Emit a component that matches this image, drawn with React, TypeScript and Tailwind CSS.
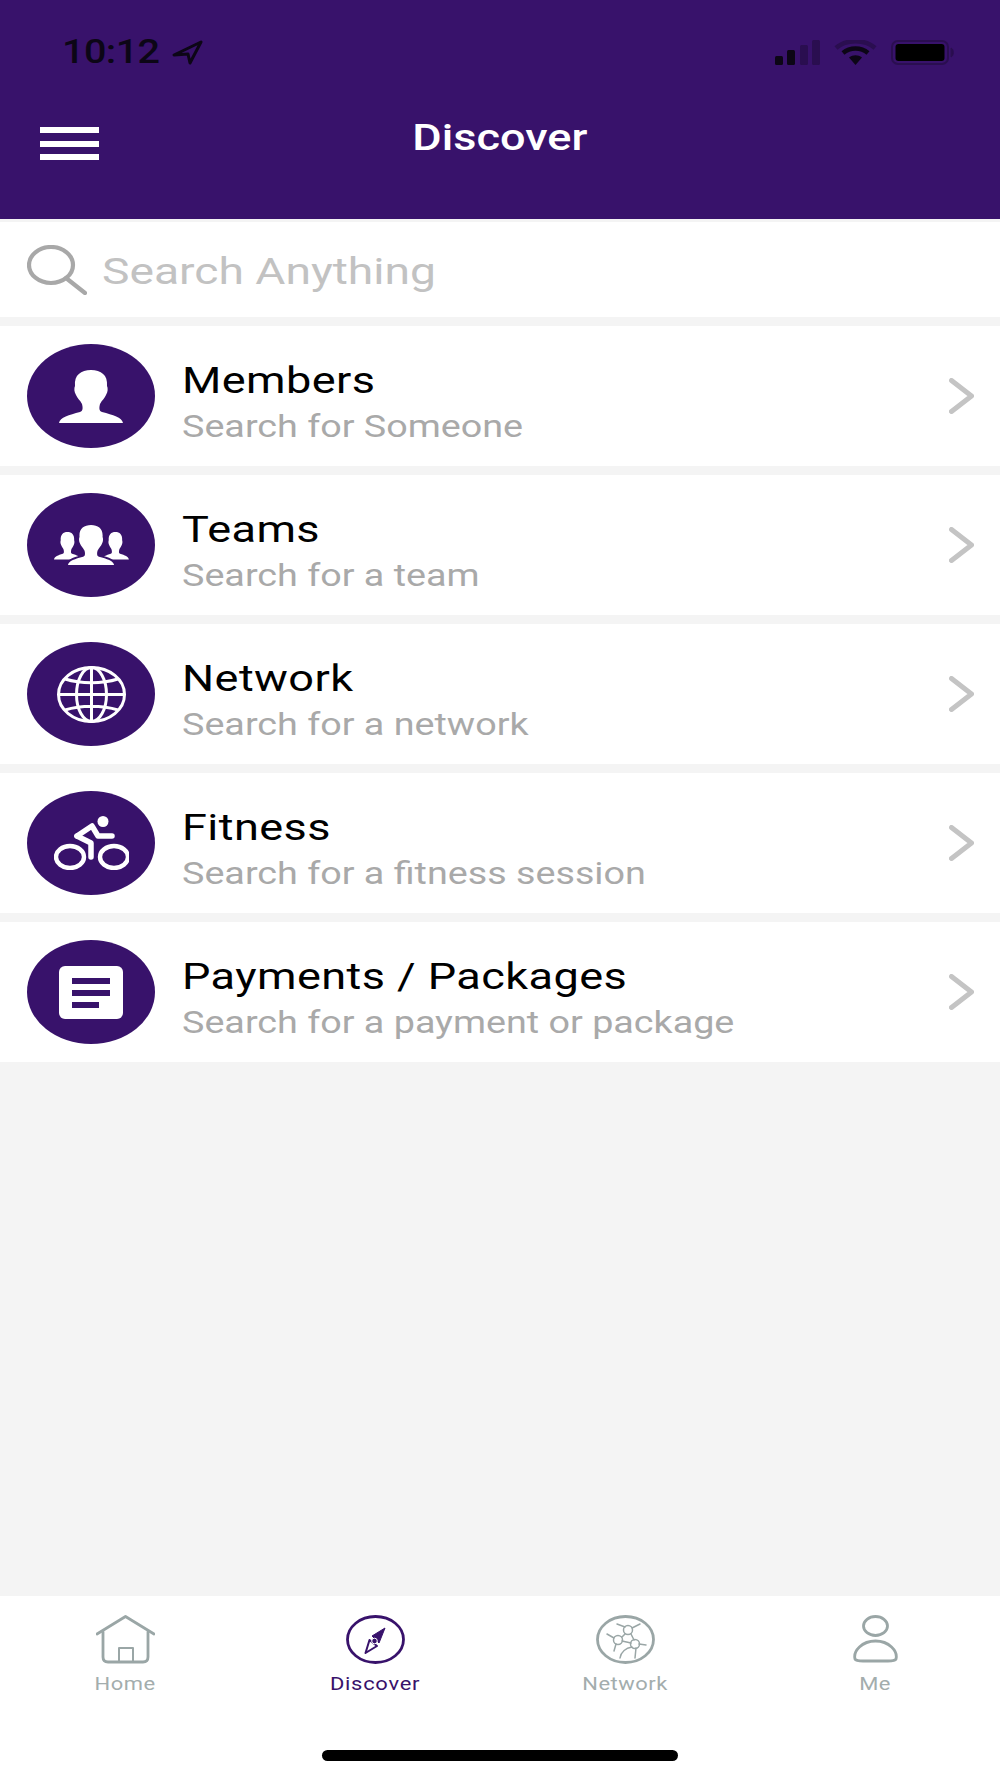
const ROWS = [
  { title: "Members", sub: "Search for Someone", icon: <MemberIcon /> },
  { title: "Teams", sub: "Search for a team", icon: <TeamIcon /> },
  { title: "Network", sub: "Search for a network", icon: <GlobeIcon /> },
  { title: "Fitness", sub: "Search for a fitness session", icon: <BikeIcon /> },
  { title: "Payments / Packages", sub: "Search for a payment or package", icon: <ListIcon /> },
];

const TABS = [
  { label: "Home", icon: <HomeIcon />, active: false },
  { label: "Discover", icon: <CompassIcon />, active: true },
  { label: "Network", icon: <NetworkIcon />, active: false },
  { label: "Me", icon: <MeIcon />, active: false },
];

const PERSON =
  "M0 53C1 47 10 45 21 42C24 41 24 38 23 34C21 30 18 28 17 25C15 22 15 18 16 16C15 5 22 0 32 0C42 0 49 5 48 16C49 18 49 22 47 25C46 28 43 30 41 34C40 38 40 41 43 42C54 45 63 47 64 53Z";

function MemberIcon() {
  return (
    <svg width="64" height="53" viewBox="0 0 64 53" fill="#fff">
      <path d={PERSON} />
    </svg>
  );
}

function TeamIcon() {
  return (
    <svg width="75" height="40" viewBox="0 0 75 40" fill="#fff">
      <g transform="translate(0 7) scale(0.42 0.52)">
        <path d={PERSON} />
      </g>
      <g transform="translate(48 7) scale(0.42 0.52)">
        <path d={PERSON} />
      </g>
      <g transform="translate(14 0) scale(0.72 0.755)">
        <path d={PERSON} stroke="#38126b" strokeWidth="5" paintOrder="stroke" />
      </g>
    </svg>
  );
}

function GlobeIcon() {
  return (
    <svg width="69" height="57" viewBox="0 0 69 57" fill="none" stroke="#fff" strokeWidth="3">
      <ellipse cx="34.5" cy="28.5" rx="33" ry="27" />
      <ellipse cx="34.5" cy="28.5" rx="15" ry="27" />
      <path d="M34.5 1.5V55.5M1.5 28.5H67.5M8 13C24 18 45 18 61 13M8 44C24 39 45 39 61 44" />
    </svg>
  );
}

function BikeIcon() {
  return (
    <svg width="75" height="54" viewBox="0 0 75 54" fill="none" stroke="#fff" strokeWidth="4.4">
      <ellipse cx="16" cy="41" rx="14" ry="11" />
      <ellipse cx="60" cy="41" rx="14" ry="11" />
      <circle cx="49" cy="5.5" r="5.5" fill="#fff" stroke="none" />
      <path d="M23 20L38 10L44 20H58" strokeLinecap="round" strokeLinejoin="round" strokeWidth="5.5" />
      <path d="M23 20L37 27V41" strokeLinecap="round" strokeLinejoin="round" strokeWidth="5.5" />
    </svg>
  );
}

function ListIcon() {
  return (
    <svg width="64" height="53" viewBox="0 0 64 53">
      <rect width="64" height="53" rx="6" fill="#fff" />
      <path d="M13 12H51V18H13ZM13 24H51V30H13ZM13 36H40V42H13Z" fill="#38126b" />
    </svg>
  );
}

function HomeIcon() {
  return (
    <svg width="59" height="49" viewBox="0 0 59 49" fill="none" stroke="#9aa6a6" strokeWidth="2.8" strokeLinejoin="round" strokeLinecap="round">
      <path d="M1 19L29.5 1.5L58 19" />
      <path d="M7 17V42C7 45.5 9 47 12 47H47C50 47 52 45.5 52 42V17" />
      <path d="M23 47V33H37V47" strokeWidth="2" />
    </svg>
  );
}

function CompassIcon() {
  return (
    <svg width="59" height="49" viewBox="0 0 59 49" fill="none" stroke="#38126b">
      <ellipse cx="29.5" cy="24.5" rx="28" ry="23" strokeWidth="2.8" />
      <path d="M39 13L26 21L33 28Z" fill="#38126b" strokeWidth="1" strokeLinejoin="round" />
      <path d="M19.5 38L23.5 25L31 31Z" strokeWidth="2" strokeLinejoin="round" />
      <circle cx="28.5" cy="26" r="2.8" fill="#38126b" stroke="#fff" strokeWidth="1" />
    </svg>
  );
}

function NetworkIcon() {
  return (
    <svg width="59" height="49" viewBox="0 0 59 49" fill="none" stroke="#9aa6a6" strokeWidth="1.5" strokeLinecap="round">
      <ellipse cx="29.5" cy="24.5" rx="28" ry="23" strokeWidth="2.8" />
      <circle cx="32" cy="15" r="4.5" />
      <circle cx="22" cy="25" r="4.5" />
      <circle cx="39" cy="29" r="4.5" />
      <path d="M21 9L29 12M44 9L36 13M26 22L29 19M35 19L38 25M26 26L35 28M18 23L11 19M20 29L18 36M43 29L50 30M40 33L39 43M36 32C30 33 25 37 24 43" />
    </svg>
  );
}

function MeIcon() {
  return (
    <svg width="47" height="49" viewBox="0 0 47 49" fill="none" stroke="#9aa6a6" strokeWidth="2.8">
      <ellipse cx="23.5" cy="11" rx="12" ry="9.5" />
      <path d="M3 44C1 36 10 26 23.5 26C37 26 46 36 44 44C43 46 40 46 36 46H11C7 46 4 46 3 44Z" />
    </svg>
  );
}

function StatusBar() {
  return (
    <div className="flex h-[104px] items-end justify-between pb-[39px] pl-[62px] pr-[46px]">
      <div className="flex items-center gap-[10px]">
        <span className="inline-block w-[97px] origin-left scale-x-[1.2] font-['Roboto',sans-serif] text-[33px] leading-[26px] font-medium tracking-[-0.5px] text-[#0c0616]">
          10:12
        </span>
        <svg width="31" height="25" viewBox="0 0 31 25" className="ml-[3px]">
          <path d="M2 15L29 2L18 23L16 14Z" fill="none" stroke="#0c0616" strokeWidth="3" strokeLinejoin="round" />
        </svg>
      </div>
      <div className="flex items-center gap-[14px]">
        <svg width="45" height="25" viewBox="0 0 45 25">
          <rect x="0" y="16" width="8" height="9" rx="1.5" fill="#0c0616" />
          <rect x="12" y="10" width="8" height="15" rx="1.5" fill="#0c0616" />
          <rect x="25" y="5" width="8" height="20" rx="1.5" fill="#2a0e50" />
          <rect x="37" y="0" width="8" height="25" rx="1.5" fill="#2a0e50" />
        </svg>
        <svg width="43" height="25" viewBox="0 0 43 25" fill="none">
          <path d="M2 8C12 -1 31 -1 41 8" stroke="#2a0e50" strokeWidth="4.5" />
          <path d="M9 13C16 7 27 7 34 13" stroke="#0c0616" strokeWidth="4.5" />
          <path d="M15 17.5L21.5 25L28 17.5C24 14.5 19 14.5 15 17.5Z" fill="#0c0616" />
        </svg>
        <svg width="63" height="25" viewBox="0 0 63 25">
          <rect x="1" y="1" width="56" height="23" rx="6" fill="none" stroke="#2a0e50" strokeWidth="2" />
          <rect x="4.5" y="4" width="49" height="17" rx="3" fill="#000" />
          <path d="M60 8C63 9 63 16 60 17Z" fill="#2a0e50" stroke="#2a0e50" />
        </svg>
      </div>
    </div>
  );
}

export default function App() {
  return (
    <div className="flex h-[1778px] w-[1000px] flex-col overflow-hidden bg-[#f4f4f4] font-['Roboto',sans-serif]">
      <header className="h-[219px] shrink-0 bg-[#38126b]">
        <StatusBar />
        <div className="relative flex h-[60px] items-center justify-center">
          <svg width="59" height="33" viewBox="0 0 59 33" fill="#fff" className="absolute left-[40px] top-[23px]">
            <path d="M0 0H59V6H0ZM0 14H59V20H0ZM0 27H59V33H0Z" />
          </svg>
          <span className="inline-block translate-y-[4px] scale-x-[1.218] text-[37px] leading-[44px] font-medium text-white">
            Discover
          </span>
        </div>
      </header>

      <div className="mt-[3px] flex h-[95px] shrink-0 items-center bg-white pl-[27px]">
        <svg width="60" height="50" viewBox="0 0 60 50" fill="none" stroke="#a8a8a8" strokeWidth="4.2" strokeLinecap="round">
          <ellipse cx="24" cy="20" rx="22" ry="18" />
          <path d="M39 33L58 48" />
        </svg>
        <span className="ml-[15px] inline-block translate-y-[2px] origin-left scale-x-[1.248] text-[37px] leading-[44px] text-[#c2c2c2]">
          Search Anything
        </span>
      </div>

      <div className="mt-[9px] flex flex-col gap-[9px]">
        {ROWS.map((row) => (
          <div key={row.title} className="flex h-[140px] items-center bg-white pl-[27px] pr-[26px]">
            <div className="flex h-[104px] w-[128px] shrink-0 items-center justify-center rounded-[50%] bg-[#38126b]">
              {row.icon}
            </div>
            <div className="ml-[27px] mt-[12px] flex flex-1 flex-col gap-[6px]">
              <span className="origin-left scale-x-[1.218] text-[37px] leading-[44px] tracking-[0.35px] text-black">{row.title}</span>
              <span className="origin-left scale-x-[1.216] text-[31px] leading-[36px] text-[#a9a9a9]">{row.sub}</span>
            </div>
            <svg width="25" height="36" viewBox="0 0 25 36" fill="none" stroke="#c4c4c4" strokeWidth="5" strokeLinecap="round" strokeLinejoin="round">
              <path d="M2.5 2.5L22.5 18L2.5 33.5" />
            </svg>
          </div>
        ))}
      </div>

      <div className="flex-1" />

      <nav className="relative h-[182px] shrink-0 bg-white">
        <div className="grid grid-cols-4 pt-[19px]">
          {TABS.map((tab) => (
            <div key={tab.label} className="flex flex-col items-center">
              <div className="flex h-[49px] items-center">{tab.icon}</div>
              <span
                className={
                  tab.active
                    ? "mt-[9px] scale-x-[1.218] text-[18px] leading-[22px] tracking-[0.6px] text-[#38126b]"
                    : "mt-[9px] scale-x-[1.218] text-[18px] leading-[22px] tracking-[0.4px] text-[#a3adad]"
                }
              >
                {tab.label}
              </span>
            </div>
          ))}
        </div>
        <div className="absolute bottom-[17px] left-[322px] h-[11px] w-[356px] rounded-full bg-black" />
      </nav>
    </div>
  );
}
